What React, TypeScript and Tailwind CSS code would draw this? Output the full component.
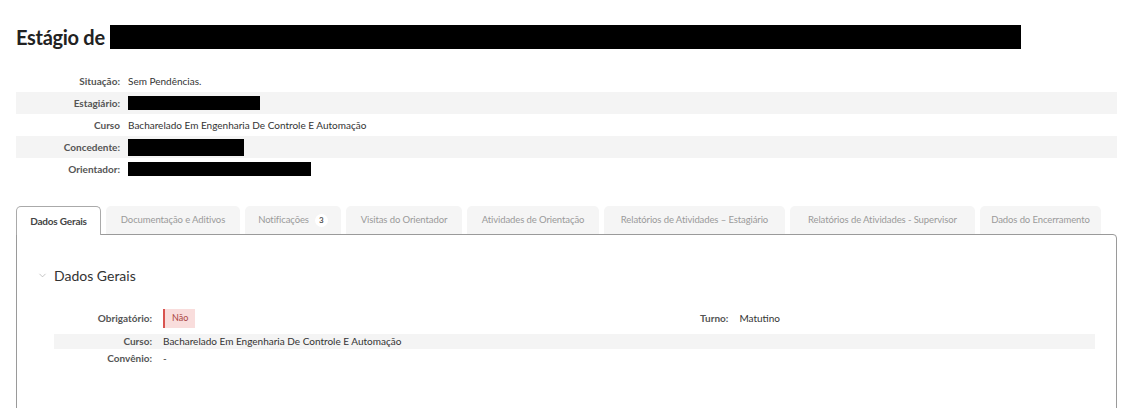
import { ChevronDown } from 'lucide-react';

const info = [
    { label: 'Situação:', value: 'Sem Pendências.' },
    { label: 'Estagiário:', redacted: 132, bg: true },
    { label: 'Curso', value: 'Bacharelado Em Engenharia De Controle E Automação' },
    { label: 'Concedente:', redacted: 116, bg: true, tall: true },
    { label: 'Orientador:', redacted: 183 },
];

const tabs = [
    { label: 'Dados Gerais', w: 'w-[85px]' },
    { label: 'Documentação e Aditivos', w: 'w-[134px]' },
    { label: 'Notificações', w: 'w-[96px]' },
    { label: 'Visitas do Orientador', w: 'w-[116px]' },
    { label: 'Atividades de Orientação', w: 'w-[132px]' },
    { label: 'Relatórios de Atividades – Estagiário', w: 'w-[181px]' },
    { label: 'Relatórios de Atividades - Supervisor', w: 'w-[185px]' },
    { label: 'Dados do Encerramento', w: 'w-[121px]' },
];

export default function App() {
    return (
        <div className="h-[408px] overflow-hidden bg-white px-4 pt-[24px] font-['Lato','Open_Sans',sans-serif] text-[#333]">
            <h1 className="flex items-center text-[20px] font-bold leading-[26px] text-[#222] tracking-[-0.3px]">
                Estágio de
                <span className="ml-[5px] inline-block h-[24px] w-[911px] bg-black" />
            </h1>

            <div className="mt-[20px] w-[1101px]">
                {info.map((row, i) => (
                    <div key={i} className={`flex h-[22px] items-center text-[10px] ${row.bg ? 'bg-[#f4f4f4]' : ''}`}>
                        <div className="w-[104px] text-right font-bold text-[#555]">{row.label}</div>
                        <div className="ml-[8px]">
                            {row.redacted ? (
                                <span className={`block bg-black ${row.tall ? 'h-[17px]' : 'h-[14px]'}`} style={{ width: row.redacted }} />
                            ) : (
                                row.value
                            )}
                        </div>
                    </div>
                ))}
            </div>

            <div className="mt-[26px] w-[1101px]">
                <div className="flex gap-[5px]">
                    {tabs.map((t, i) =>
                        i === 0 ? (
                            <div key={t.label} className={`relative z-10 -mb-px flex h-[29px] items-center justify-center whitespace-nowrap rounded-t-[5px] border border-b-0 border-[#aaa] bg-white text-[10px] font-bold tracking-[-0.2px] text-[#444] ${t.w}`}>
                                {t.label}
                            </div>
                        ) : (
                            <div key={t.label} className={`flex h-[28px] items-center justify-center whitespace-nowrap rounded-t-[5px] bg-[#f5f5f5] text-[9.5px] tracking-[-0.1px] text-[#9a9a9a] ${t.w}`}>
                                {t.label}
                                {t.label === 'Notificações' && (
                                    <span className="ml-[6px] flex h-[13px] w-[13px] items-center justify-center rounded-full bg-white text-[8px] font-bold text-[#555]">3</span>
                                )}
                            </div>
                        )
                    )}
                </div>
                <div className="h-[190px] rounded-tr-[4px] border border-[#9a9a9a] pt-[30px]">
                    <div className="flex items-center pl-[20px] text-[14px] text-[#333]">
                        <ChevronDown size={11} strokeWidth={1.5} className="text-[#aaa]" />
                        <span className="ml-[6px]">Dados Gerais</span>
                    </div>

                    <div className="ml-[37px] mt-[21px] w-[1041px] text-[10px]">
                        <div className="flex h-[22px] items-center">
                            <div className="w-[98px] text-right font-bold text-[#555]">Obrigatório:</div>
                            <div className="ml-[11px] w-[537px]">
                                <span className="inline-flex h-[19px] items-center border-l-2 border-[#d9534f] bg-[#f9dddc] px-[7px] text-[9px] text-[#a94442]">Não</span>
                            </div>
                            <div className="text-right font-bold text-[#555]">Turno:</div>
                            <div className="ml-[11px]">Matutino</div>
                        </div>
                        <div className="mt-[5px] flex h-[15px] items-center bg-[#f4f4f4]">
                            <div className="w-[98px] text-right font-bold text-[#555]">Curso:</div>
                            <div className="ml-[11px]">Bacharelado Em Engenharia De Controle E Automação</div>
                        </div>
                        <div className="flex h-[18px] items-center">
                            <div className="w-[98px] text-right font-bold text-[#555]">Convênio:</div>
                            <div className="ml-[11px]">-</div>
                        </div>
                    </div>
                </div>
            </div>
        </div>
    );
}
